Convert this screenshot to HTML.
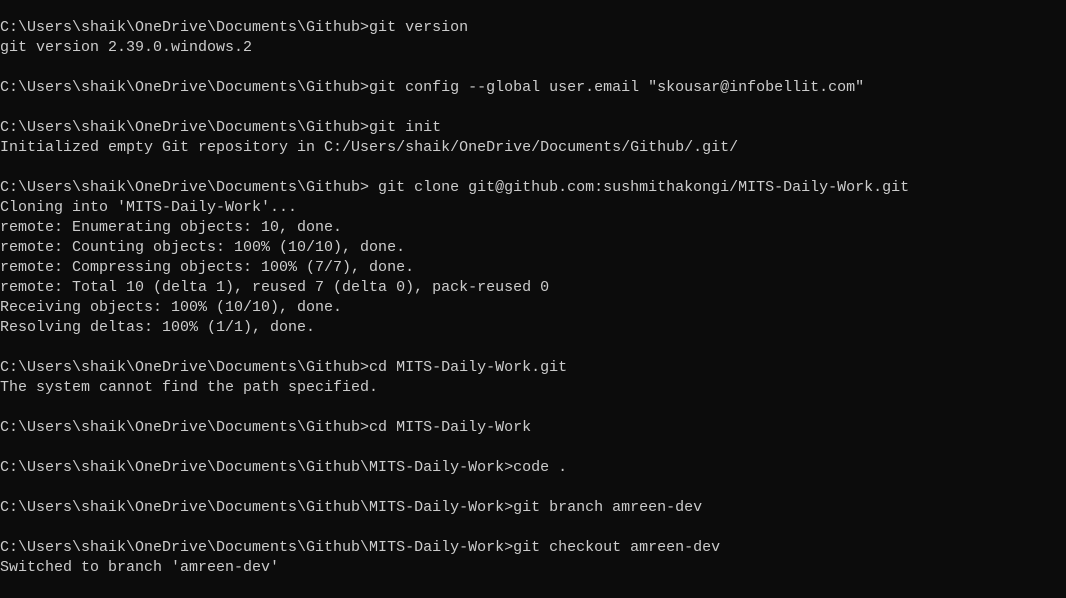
<!DOCTYPE html>
<html><head><style>
html,body{margin:0;padding:0;background:#0c0c0c;width:1066px;height:598px;overflow:hidden}
pre{margin:0;position:absolute;left:0;top:18px;font-family:"Liberation Mono",monospace;font-size:15px;line-height:20px;color:#cccccc}
</style></head><body><pre>C:\Users\shaik\OneDrive\Documents\Github>git version
git version 2.39.0.windows.2

C:\Users\shaik\OneDrive\Documents\Github>git config --global user.email "skousar@infobellit.com"

C:\Users\shaik\OneDrive\Documents\Github>git init
Initialized empty Git repository in C:/Users/shaik/OneDrive/Documents/Github/.git/

C:\Users\shaik\OneDrive\Documents\Github> git clone git@github.com:sushmithakongi/MITS-Daily-Work.git
Cloning into 'MITS-Daily-Work'...
remote: Enumerating objects: 10, done.
remote: Counting objects: 100% (10/10), done.
remote: Compressing objects: 100% (7/7), done.
remote: Total 10 (delta 1), reused 7 (delta 0), pack-reused 0
Receiving objects: 100% (10/10), done.
Resolving deltas: 100% (1/1), done.

C:\Users\shaik\OneDrive\Documents\Github>cd MITS-Daily-Work.git
The system cannot find the path specified.

C:\Users\shaik\OneDrive\Documents\Github>cd MITS-Daily-Work

C:\Users\shaik\OneDrive\Documents\Github\MITS-Daily-Work>code .

C:\Users\shaik\OneDrive\Documents\Github\MITS-Daily-Work>git branch amreen-dev

C:\Users\shaik\OneDrive\Documents\Github\MITS-Daily-Work>git checkout amreen-dev
Switched to branch 'amreen-dev'</pre></body></html>
